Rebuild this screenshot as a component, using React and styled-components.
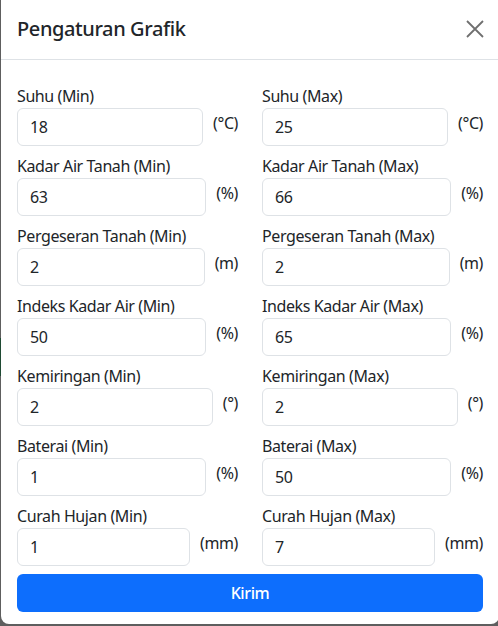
import { Fragment } from 'react';
import styled, { createGlobalStyle } from 'styled-components';

const GlobalStyle = createGlobalStyle`
  html, body {
    margin: 0;
    padding: 0;
    overflow: hidden;
  }
  body {
    background: linear-gradient(
      to bottom,
      #5e5e5e 0,
      #5e5e5e 338px,
      #1f4a33 338px,
      #1f4a33 376px,
      #5e5e5e 376px
    );
    font-family: 'Noto Sans', 'Open Sans', sans-serif;
    letter-spacing: -0.4px;
    color: #212529;
  }
  * {
    box-sizing: border-box;
  }
`;

const Modal = styled.div`
  width: 498px;
  height: 624px;
  margin-left: 1px;
  background: #fff;
  border-radius: 0 0 8px 8px;
  display: flex;
  flex-direction: column;
`;

const Header = styled.div`
  display: flex;
  align-items: center;
  justify-content: space-between;
  padding: 14px 16px 15px;
  border-bottom: 1px solid #dee2e6;
`;

const Title = styled.h5`
  margin: 0;
  font-size: 20px;
  font-weight: 500;
  line-height: 30px;
`;

const Close = styled.button`
  border: 0;
  background: transparent;
  padding: 0;
  margin-right: -2px;
  width: 20px;
  height: 20px;
  display: flex;
  align-items: center;
  justify-content: center;
  cursor: pointer;
`;

const Body = styled.form`
  padding: 24px 16px 14px;
  display: flex;
  flex-direction: column;
`;

const Grid = styled.div`
  display: grid;
  grid-template-columns: minmax(0, 1fr) minmax(0, 1fr);
  column-gap: 24px;
`;

const Field = styled.div`
  margin-bottom: 8px;
`;

const Label = styled.label`
  display: block;
  font-size: 16px;
  line-height: 24px;
  white-space: nowrap;
`;

const Row = styled.div`
  display: flex;
  align-items: flex-start;
  gap: 10px;
`;

const Input = styled.input`
  flex: 1;
  min-width: 0;
  height: 38px;
  padding: 6px 12px;
  font-family: inherit;
  letter-spacing: inherit;
  font-size: 16px;
  color: #212529;
  border: 1px solid #dee2e6;
  border-radius: 6px;
  outline: none;
`;

const Unit = styled.span`
  font-size: 16px;
  line-height: 24px;
  margin-top: 3px;
  white-space: nowrap;
`;

const Submit = styled.button`
  height: 38px;
  border: 0;
  border-radius: 6px;
  background: #0d6efd;
  color: #fff;
  font-family: inherit;
  letter-spacing: inherit;
  font-size: 16px;
  font-weight: 500;
  cursor: pointer;
`;

const fields = [
  { name: 'Suhu', unit: '(°C)', min: 18, max: 25 },
  { name: 'Kadar Air Tanah', unit: '(%)', min: 63, max: 66 },
  { name: 'Pergeseran Tanah', unit: '(m)', min: 2, max: 2 },
  { name: 'Indeks Kadar Air', unit: '(%)', min: 50, max: 65 },
  { name: 'Kemiringan', unit: '(°)', min: 2, max: 2 },
  { name: 'Baterai', unit: '(%)', min: 1, max: 50 },
  { name: 'Curah Hujan', unit: '(mm)', min: 1, max: 7 },
];

function InputField({ label, unit, value }) {
  return (
    <Field>
      <Label>{label}</Label>
      <Row>
        <Input type="text" defaultValue={value} />
        <Unit>{unit}</Unit>
      </Row>
    </Field>
  );
}

export default function App() {
  return (
    <>
      <GlobalStyle />
      <Modal>
        <Header>
          <Title>Pengaturan Grafik</Title>
          <Close type="button" aria-label="Close">
            <svg width="18" height="18" viewBox="0 0 18 18">
              <path d="M1 1 L17 17 M17 1 L1 17" stroke="#6f6f6f" strokeWidth="1.8" />
            </svg>
          </Close>
        </Header>
        <Body onSubmit={(e) => e.preventDefault()}>
          <Grid>
            {fields.map((f) => (
              <Fragment key={f.name}>
                <InputField label={`${f.name} (Min)`} unit={f.unit} value={f.min} />
                <InputField label={`${f.name} (Max)`} unit={f.unit} value={f.max} />
              </Fragment>
            ))}
          </Grid>
          <Submit type="submit">Kirim</Submit>
        </Body>
      </Modal>
    </>
  );
}
